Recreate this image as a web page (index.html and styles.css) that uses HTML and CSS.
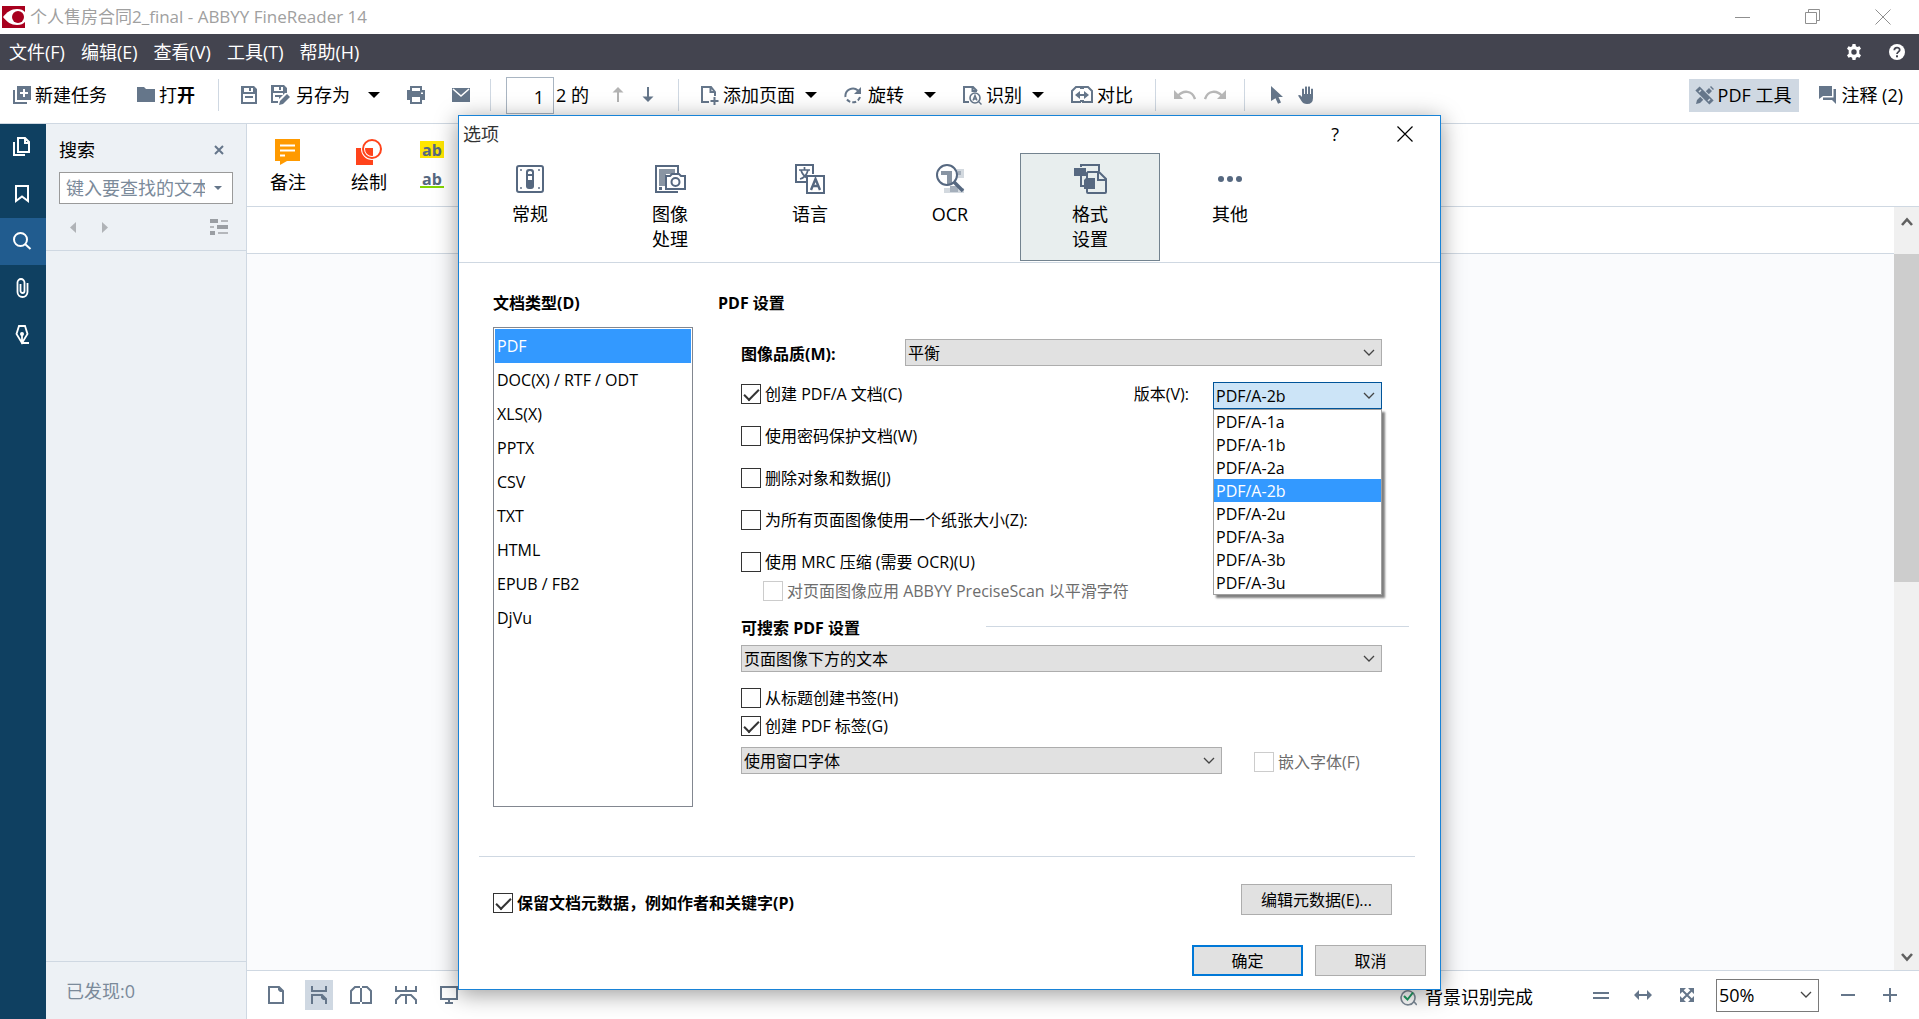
FILE: index.html
```html
<!DOCTYPE html>
<html lang="zh-CN">
<head>
    <meta charset="UTF-8">
    <meta name="viewport" content="width=device-width, initial-scale=1.0">
    <title>个人售房合同2_final - ABBYY FineReader 14</title>
    <link rel="stylesheet" href="styles.css">
</head>
<body>
    <header class="titlebar">
        <svg class="logo" width="23" height="22" viewBox="0 0 23 22"><rect width="23" height="22" fill="#a8001e"/><path d="M1 11C5 6 9 3 15 3c4 0 6 1 8 3v10c-2 2-4 3-8 3-6 0-10-3-14-8z" fill="#fff"/><circle cx="16" cy="11" r="6" fill="#a8001e"/></svg>
        <span class="title">个人售房合同2_final - ABBYY FineReader 14</span>
        <div class="window-buttons">
            <button type="button" aria-label="最小化"><svg width="16" height="16" viewBox="0 0 16 16"><path d="M0 8.500h15"/></svg></button>
            <button type="button" aria-label="还原"><svg width="16" height="16" viewBox="0 0 16 16"><path d="M.5 3.500h11v11H.5zM3.500 3.500v-3h11v11h-3"/></svg></button>
            <button type="button" aria-label="关闭"><svg width="16" height="16" viewBox="0 0 16 16"><path d="M.5.5l15 15M15.500.5l-15 15"/></svg></button>
        </div>
    </header>

    <nav class="menubar">
        <button type="button">文件(F)</button>
        <button type="button">编辑(E)</button>
        <button type="button">查看(V)</button>
        <button type="button">工具(T)</button>
        <button type="button">帮助(H)</button>
        <div class="menu-right">
            <button type="button" aria-label="设置"><svg width="16" height="16" viewBox="0 0 16 16"><path fill="#fff" fill-rule="evenodd" d="M6.500 0h3l.4 2.200 1.500.8 2.100-.8L15 4.800l-1.700 1.500v3.400l1.700 1.500-1.500 2.600-2.100-.8-1.500.8-.4 2.200h-3l-.4-2.200-1.500-.8-2.100.8L1 11.200l1.700-1.500V6.300L1 4.800l1.500-2.600 2.100.8 1.500-.8zM8 5.300a2.700 2.700 0 1 0 0 5.400 2.700 2.700 0 0 0 0-5.400z"/></svg></button>
            <button type="button" aria-label="帮助"><svg width="16" height="16" viewBox="0 0 16 16"><circle cx="8" cy="8" r="8" fill="#fff"/><path d="M5.300 6.200C5.300 2.700 10.700 2.700 10.700 6 10.700 7.800 8 8 8 10" fill="none" stroke="#43444f" stroke-width="1.800"/><rect x="7" y="11.300" width="2" height="2" fill="#43444f"/></svg></button>
        </div>
    </nav>

    <div class="toolbar">
        <div class="tool-group group-file">
            <button type="button"><svg width="18" height="18" viewBox="0 0 18 18"><path fill="#65768a" d="M4 0h14v14H4z"/><path d="M11 3v8M7 7h8" stroke="#fff" stroke-width="2"/><path d="M1 4v13h13" fill="none" stroke="#65768a" stroke-width="2"/></svg>新建任务</button>
            <button type="button"><svg width="18" height="18" viewBox="0 0 18 18"><path fill="#65768a" d="M0 1h7l2 2h9v13H0z"/></svg><span>打<b>开</b></span></button>
        </div>
        <div class="tool-group group-save">
            <button type="button" aria-label="保存"><svg width="16" height="18" viewBox="0 0 16 18"><path fill="#65768a" fill-rule="evenodd" d="M0 0h13l3 3v15H0zM3 2v4h9V2h-2v3H8V2zM2 8v8h12V8zM4 10h8v2H4z"/></svg></button>
            <button type="button" class="save-as"><svg width="19" height="20" viewBox="0 0 19 20"><path fill="#65768a" fill-rule="evenodd" d="M0 0h13l3 3v5h-2l-6 6v-2H4v-2h8V8H2v8h5v2H0zM3 2v4h9V2h-2v3H8V2z"/><path fill="#65768a" d="M16 9l3 3-7 7-4 1 1-4z"/></svg>另存为<i class="caret"></i></button>
            <button type="button" aria-label="打印" class="wide"><svg width="18" height="18" viewBox="0 0 18 18"><path fill="#65768a" fill-rule="evenodd" d="M3 0h12v4h3v10h-3v4H3v-4H0V4h3zM5 2v3h8V2zM5 11v5h8v-5zM14 6.500v1.500h2V6.500z"/></svg></button>
            <button type="button" aria-label="邮件" class="wide"><svg width="18" height="14" viewBox="0 0 18 14"><path fill="#65768a" d="M0 0h18v14H0z"/><path d="M1 1l8 7 8-7" fill="none" stroke="#fff" stroke-width="1.600"/></svg></button>
        </div>
        <div class="tool-group group-page">
            <input type="text" class="page-input" value="1" aria-label="页码">
            <span class="page-total">2 的</span>
            <button type="button" aria-label="上一页" class="page-up"><svg width="12" height="16" viewBox="0 0 12 16"><path d="M6 15V2" stroke="#b3b3b3" stroke-width="2"/><path d="M6 0l5.500 5.500H.5z" fill="#b3b3b3"/></svg></button>
            <button type="button" aria-label="下一页"><svg width="12" height="16" viewBox="0 0 12 16"><path d="M6 0v13" stroke="#65768a" stroke-width="2"/><path d="M6 15l5.500-5.500H.5z" fill="#65768a"/></svg></button>
        </div>
        <div class="tool-group group-edit">
            <button type="button"><svg width="18" height="19" viewBox="0 0 18 19"><path d="M8 16H1V1h9l4 5v4M9.500 1v5H14" fill="none" stroke="#65768a" stroke-width="2"/><path d="M13.500 11v8M9.500 15h8" stroke="#65768a" stroke-width="2"/></svg>添加页面<i class="caret near"></i></button>
            <button type="button" class="rotate"><svg width="18" height="18" viewBox="0 0 18 18"><path d="M1.500 11A7.500 7.500 0 0 1 14 4.500" fill="none" stroke="#65768a" stroke-width="2"/><path fill="#65768a" d="M17 1v7h-7z"/><path d="M3 13.500A7.500 7.500 0 0 0 16 11" fill="none" stroke="#65768a" stroke-width="2" stroke-dasharray="4 2"/></svg>旋转<i class="caret"></i></button>
            <button type="button"><svg width="19" height="19" viewBox="0 0 19 19"><path d="M6 16H1V1h9l4 4M9.500 1v4H14" fill="none" stroke="#65768a" stroke-width="2"/><circle cx="12" cy="12" r="5" fill="#fff" stroke="#65768a" stroke-width="1.600"/><path d="M10 14.500l2-5 2 5M11 13h2M15.500 15.500l3 3" fill="none" stroke="#65768a" stroke-width="1.400"/></svg>识别<i class="caret near"></i></button>
            <button type="button"><svg width="22" height="18" viewBox="0 0 22 18"><path d="M10 16H1V5l4-4h5v2M12 3V1h5l4 4v11h-9v-2M10 16v-2" fill="none" stroke="#65768a" stroke-width="2"/><path d="M6 9h10" stroke="#65768a" stroke-width="2"/><path fill="#65768a" d="M4 9l5-4v8zM18 9l-5-4v8z"/></svg>对比</button>
        </div>
        <div class="tool-group group-undo">
            <button type="button" aria-label="撤消"><svg width="22" height="12" viewBox="0 0 22 12"><path d="M4 7c5-6 14-6 17 3" fill="none" stroke="#b8b8b8" stroke-width="2.400"/><path fill="#b8b8b8" d="M0 1v9h9z"/></svg></button>
            <button type="button" aria-label="重做"><svg width="22" height="12" viewBox="0 0 22 12"><path d="M18 7C13 1 4 1 1 10" fill="none" stroke="#b8b8b8" stroke-width="2.400"/><path fill="#b8b8b8" d="M22 1v9h-9z"/></svg></button>
        </div>
        <div class="tool-group group-pointer">
            <button type="button" aria-label="选择"><svg width="12" height="18" viewBox="0 0 12 18"><path fill="#65768a" d="M0 0l12 11H7.500l2.500 5.500-3 1.300-2.500-5.500L0 15z"/></svg></button>
            <button type="button" aria-label="手形"><svg width="17" height="18" viewBox="0 0 17 18"><path fill="#65768a" d="M4 11V3q1-1 2 0v5h1V1q1-1.500 2 0v7h1V1q1-1.300 2 0v7h1V3q1-1 2 0v9q0 6-6 6-4 0-5.500-3L0 9.500Q2 8 4 11z"/></svg></button>
        </div>
        <div class="toolbar-right">
            <button type="button" class="active"><svg width="19" height="19" viewBox="0 0 19 19"><path d="M1 18l1-4L14 2l3 3L5 17zM15 1l1-1 3 3-1 1z" fill="#65768a"/><path d="M3 3l13 13" stroke="#cfd8e2" stroke-width="8"/><path d="M2.500 2.500l14 14" stroke="#65768a" stroke-width="6"/><path d="M4 6l2-2M13 15l2-2" stroke="#cfd8e2" stroke-width="1.500"/></svg>PDF 工具</button>
            <button type="button"><svg width="18" height="18" viewBox="0 0 18 18"><path fill="#65768a" d="M0 0h13v10H4l-4 3zM14.500 3H17v15l-4-4H4v-2.500h10.500z"/></svg>注释 (2)</button>
        </div>
    </div>

    <main class="workspace">
        <nav class="rail">
            <button type="button" aria-label="页面"><svg width="20" height="22" viewBox="0 0 20 22"><path d="M6 2h7l4 4v10H6zM13 2v5h4M2 6v13h11" fill="none" stroke="#fff" stroke-width="2"/></svg></button>
            <button type="button" aria-label="书签"><svg width="20" height="20" viewBox="0 0 20 20"><path d="M4 2h12v15l-6-4.500L4 17z" fill="none" stroke="#fff" stroke-width="2"/></svg></button>
            <button type="button" aria-label="搜索" class="active"><svg width="20" height="20" viewBox="0 0 20 20"><circle cx="8.500" cy="8.500" r="6.500" fill="none" stroke="#fff" stroke-width="2"/><path d="M13 13l5.500 5" stroke="#fff" stroke-width="2"/></svg></button>
            <button type="button" aria-label="附件"><svg width="20" height="22" viewBox="0 0 20 22"><path d="M15.500 6v9a5 5 0 0 1-10 0V5.500a3.500 3.500 0 0 1 7 0V14a2 2 0 0 1-4 0V7" fill="none" stroke="#fff" stroke-width="1.800"/></svg></button>
            <button type="button" aria-label="签名"><svg width="20" height="22" viewBox="0 0 20 22"><path d="M7 2h6l2.500 8L10 19 4.500 10zM10 10v9h7" fill="none" stroke="#fff" stroke-width="1.800"/><circle cx="10" cy="10" r="2" fill="#fff"/></svg></button>
        </nav>

        <aside class="search-panel">
            <div class="search-top">
                <div class="search-head">
                    <label for="search">搜索</label>
                    <button type="button" aria-label="关闭搜索"><svg width="10" height="10" viewBox="0 0 10 10"><path d="M1 1l8 8M9 1L1 9" stroke="#65768a" stroke-width="2"/></svg></button>
                </div>
                <div class="search-box">
                    <input id="search" type="text" placeholder="键入要查找的文本">
                    <i class="caret small"></i>
                </div>
                <div class="search-nav">
                    <button type="button" aria-label="上一个"><svg width="6" height="11" viewBox="0 0 6 11"><path fill="#b0b3b7" d="M6 0v11L0 5.500z"/></svg></button>
                    <button type="button" aria-label="下一个"><svg width="6" height="11" viewBox="0 0 6 11"><path fill="#b0b3b7" d="M0 0v11l6-5.500z"/></svg></button>
                    <button type="button" aria-label="结果视图" class="result-view"><svg width="18" height="16" viewBox="0 0 18 16"><path fill="#9a9ea3" d="M0 0h8v4H0zM7 6h11v4H7zM0 12h5v4H0z"/><path fill="#b4b7bb" d="M11 1h7v2h-7zM0 7h4v2H0zM8 13h10v2H8z"/></svg></button>
                </div>
            </div>
            <p class="found">已发现:0</p>
        </aside>

        <section class="document">
            <div class="ribbon">
                <button type="button"><svg width="26" height="26" viewBox="0 0 26 26"><path fill="#ff9a00" d="M0 0h25v22H12l-7 4v-4H0z"/><path d="M5 6.500h15M5 11.500h15M5 16.500h5" stroke="#fff" stroke-width="2"/></svg>备注</button>
                <button type="button"><svg width="26" height="26" viewBox="0 0 26 26"><path fill="#ff431b" d="M0 9h17v17H0z"/><circle cx="16" cy="10" r="9" fill="none" stroke="#fff" stroke-width="4"/><circle cx="16" cy="10" r="9" fill="none" stroke="#ff431b" stroke-width="2"/></svg>绘制</button>
                <div class="marks">
                    <button type="button" class="mark-highlight">ab</button>
                    <button type="button" class="mark-underline">ab</button>
                </div>
            </div>
            <div class="canvas">
                <div class="page-area">
                    <div class="strip"></div>
                </div>
                <div class="scrollbar">
                    <svg width="12" height="9" viewBox="0 0 12 9"><path d="M1 8l5-5.500L11 8" fill="none" stroke="#606060" stroke-width="2.600"/></svg>
                    <div class="thumb"></div>
                    <svg class="down" width="12" height="9" viewBox="0 0 12 9"><path d="M1 1l5 5.500L11 1" fill="none" stroke="#606060" stroke-width="2.600"/></svg>
                </div>
            </div>
            <footer class="statusbar">
                <div class="views">
                    <button type="button" aria-label="单页" class="single"><svg width="16" height="18" viewBox="0 0 16 18"><path d="M1 1h10l4 4v12H1z" fill="none" stroke="#65768a" stroke-width="2"/><path fill="#65768a" d="M10 0l6 6h-4l-2-2z"/></svg></button>
                    <button type="button" aria-label="连续单页" class="active"><svg width="16" height="18" viewBox="0 0 16 18"><path d="M1 0v5h14V0M1 18V9h10l4 4v5" fill="none" stroke="#65768a" stroke-width="2"/><path fill="#65768a" d="M10 8l6 6h-4l-2-2z"/></svg></button>
                    <button type="button" aria-label="双页"><svg width="22" height="18" viewBox="0 0 22 18"><path d="M11 1v16M5 1h12l4 4v12H1V5z" fill="none" stroke="#65768a" stroke-width="2"/><path d="M11 0v2M11 16v2" stroke="#fff" stroke-width="2"/></svg></button>
                    <button type="button" aria-label="连续双页"><svg width="22" height="18" viewBox="0 0 22 18"><path d="M1 0v5h20V0M11 0v18M1 18v-4l5-5h10l5 5v4" fill="none" stroke="#65768a" stroke-width="2"/><path d="M11 6v2" stroke="#fff" stroke-width="2"/></svg></button>
                    <button type="button" aria-label="全屏"><svg width="18" height="18" viewBox="0 0 18 18"><path d="M1 1h16v12H1zM9 13v4M5 17h8" fill="none" stroke="#65768a" stroke-width="2"/></svg></button>
                </div>
                <div class="recognized">
                    <svg width="17" height="18" viewBox="0 0 17 18"><path d="M14 13.500a7 7 0 1 1 .8-5.500M14.800 8a7 7 0 0 1-1 5.500l3 3.500" fill="none" stroke="#7d8a97" stroke-width="1.600"/><path d="M4 8l3.500 3.500L13 4.500" fill="none" stroke="#1f9d61" stroke-width="2"/></svg>
                    <span>背景识别完成</span>
                </div>
                <div class="zoom">
                    <button type="button" aria-label="实际大小" class="actual"><svg width="16" height="16" viewBox="0 0 16 16"><path d="M0 6h16M0 11h16" stroke="#65768a" stroke-width="2"/></svg></button>
                    <button type="button" aria-label="适合宽度"><svg width="18" height="16" viewBox="0 0 18 16"><path d="M3 8h12" stroke="#65768a" stroke-width="2"/><path fill="#65768a" d="M0 8l5-5v10zM18 8l-5-5v10z"/></svg></button>
                    <button type="button" aria-label="适合页面"><svg width="14" height="14" viewBox="0 0 14 14"><path d="M1 1l12 12M13 1L1 13" stroke="#65768a" stroke-width="2"/><path fill="#65768a" d="M0 0h6L0 6zM14 0v6L8 0zM0 14V8l6 6zM14 14H8l6-6z"/></svg></button>
                    <span class="select zoom-select">
                        <select aria-label="缩放"><option>50%</option></select>
                        <svg width="12" height="8" viewBox="0 0 12 8"><path d="M1 1l5 5 5-5"/></svg>
                    </span>
                    <button type="button" aria-label="缩小"><svg width="14" height="14" viewBox="0 0 14 14"><path d="M0 7h14" stroke="#65768a" stroke-width="2"/></svg></button>
                    <button type="button" aria-label="放大"><svg width="14" height="14" viewBox="0 0 14 14"><path d="M0 7h14M7 0v14" stroke="#65768a" stroke-width="2"/></svg></button>
                </div>
            </footer>
        </section>
    </main>

    <div class="dialog" role="dialog" aria-labelledby="dialog-title">
        <div class="dialog-title">
            <span id="dialog-title">选项</span>
            <button type="button" class="dialog-help">?</button>
            <button type="button" aria-label="关闭"><svg width="16" height="16" viewBox="0 0 16 16"><path d="M.5.5l15 15M15.500.5l-15 15" stroke="#000" stroke-width="1.200"/></svg></button>
        </div>

        <div class="tabs">
            <button type="button"><svg width="32" height="32" viewBox="0 0 32 32"><rect x="3" y="3" width="26" height="26" rx="2" fill="none" stroke="#566880" stroke-width="2"/><rect x="12" y="6" width="8" height="20" rx="3" fill="#566880"/><path fill="#fff" d="M14 9q2-2 4 0v2h-4zM14 13h4v4h-4z"/><path fill="#8793a4" d="M6 6h2v2H6zM24 6h2v2h-2zM6 24h2v2H6zM24 24h2v2h-2z"/></svg>常规</button>
            <button type="button"><svg width="32" height="32" viewBox="0 0 32 32"><path d="M24 11V3H2v26h22" fill="none" stroke="#566880" stroke-width="2"/><path fill="#8995a3" d="M5 6h16v5H12v12H5z"/><path fill="#566880" d="M5 24h3v3H5z"/><path d="M12 13h4l2-2h7l2 2h4v13H12z" fill="#fff" stroke="#566880" stroke-width="2"/><circle cx="21.500" cy="19" r="4" fill="none" stroke="#566880" stroke-width="2"/></svg>图像<br>处理</button>
            <button type="button"><svg width="32" height="32" viewBox="0 0 32 32"><path d="M13 19H2V2h17v9" fill="none" stroke="#566880" stroke-width="2"/><path d="M5 7h11M10.500 4v3M14 7c-1 4-4 8-8 9M7 7c1 4 3 6 6 8" fill="none" stroke="#566880" stroke-width="1.700"/><rect x="13" y="13" width="17" height="17" fill="#fff" stroke="#566880" stroke-width="2"/><path d="M17 27l4.500-11L26 27M18.500 23h6" fill="none" stroke="#566880" stroke-width="2.400"/></svg>语言</button>
            <button type="button"><svg width="32" height="32" viewBox="0 0 32 32"><path fill="#d3d9df" d="M23 6h7v9h-7zM10 25h20v5H10z"/><path fill="#a5afbb" d="M24 8h3v4h-3zM16 23h8v6h-8z"/><path fill="#8995a3" d="M7 8h11v13h-5V12H7z"/><circle cx="13" cy="12" r="10" fill="none" stroke="#566880" stroke-width="2"/><path d="M20 19l9 9" stroke="#566880" stroke-width="3.500"/></svg>OCR</button>
            <button type="button" class="active"><svg width="34" height="32" viewBox="0 0 34 32"><path d="M26 8V2H8v2M8 12v11h4" fill="none" stroke="#566880" stroke-width="2"/><path fill="#566880" d="M1 5h12v8H1z"/><path d="M15 9h11l7 7v13q0 1-1 1H15q-1 0-1-1V10z" fill="#e8eeee" stroke="#566880" stroke-width="2"/><path d="M25 9v8h8" fill="none" stroke="#566880" stroke-width="2"/><path fill="#566880" d="M13 15h9v11H11v-9z"/></svg>格式<br>设置</button>
            <button type="button"><svg width="32" height="32" viewBox="0 0 32 32"><g fill="#566880"><circle cx="7" cy="16" r="3"/><circle cx="16" cy="16" r="3"/><circle cx="25" cy="16" r="3"/></g></svg>其他</button>
        </div>

        <div class="dialog-body">
            <div class="doc-types">
                <h3 id="types-label">文档类型(D)</h3>
                <ul role="listbox" aria-labelledby="types-label">
                    <li role="option" aria-selected="true" class="selected">PDF</li>
                    <li role="option">DOC(X) / RTF / ODT</li>
                    <li role="option">XLS(X)</li>
                    <li role="option">PPTX</li>
                    <li role="option">CSV</li>
                    <li role="option">TXT</li>
                    <li role="option">HTML</li>
                    <li role="option">EPUB / FB2</li>
                    <li role="option">DjVu</li>
                </ul>
            </div>

            <div class="settings">
                <h3>PDF 设置</h3>
                <div class="fields">
                    <div class="row quality-row">
                        <label class="strong quality-label" for="quality">图像品质(M):</label>
                        <span class="select grow">
                            <select id="quality"><option>平衡</option></select>
                            <svg width="12" height="8" viewBox="0 0 12 8"><path d="M1 1l5 5 5-5"/></svg>
                        </span>
                    </div>
                    <div class="row version-row">
                        <label class="check"><input type="checkbox" checked>创建 PDF/A 文档(C)</label>
                        <label class="version-label" for="version">版本(V):</label>
                        <span class="select open">
                            <select id="version"><option>PDF/A-2b</option></select>
                            <svg width="12" height="8" viewBox="0 0 12 8"><path d="M1 1l5 5 5-5"/></svg>
                            <ul class="options" role="listbox" aria-label="版本">
                                <li role="option">PDF/A-1a</li>
                                <li role="option">PDF/A-1b</li>
                                <li role="option">PDF/A-2a</li>
                                <li role="option" aria-selected="true" class="selected">PDF/A-2b</li>
                                <li role="option">PDF/A-2u</li>
                                <li role="option">PDF/A-3a</li>
                                <li role="option">PDF/A-3b</li>
                                <li role="option">PDF/A-3u</li>
                            </ul>
                        </span>
                    </div>
                    <div class="checks">
                        <label class="check"><input type="checkbox">使用密码保护文档(W)</label>
                        <label class="check"><input type="checkbox">删除对象和数据(J)</label>
                        <label class="check"><input type="checkbox">为所有页面图像使用一个纸张大小(Z):</label>
                        <label class="check"><input type="checkbox">使用 MRC 压缩 (需要 OCR)(U)</label>
                    </div>
                    <label class="check sub disabled"><input type="checkbox" disabled>对页面图像应用 ABBYY PreciseScan 以平滑字符</label>
                </div>

                <div class="fields searchable">
                    <div class="section-head">
                        <label class="strong" for="searchable">可搜索 PDF 设置</label>
                        <hr>
                    </div>
                    <span class="select">
                        <select id="searchable"><option>页面图像下方的文本</option></select>
                        <svg width="12" height="8" viewBox="0 0 12 8"><path d="M1 1l5 5 5-5"/></svg>
                    </span>
                    <div class="checks tight">
                        <label class="check"><input type="checkbox">从标题创建书签(H)</label>
                        <label class="check"><input type="checkbox" checked>创建 PDF 标签(G)</label>
                    </div>
                    <div class="row font-row">
                        <span class="select grow">
                            <select aria-label="字体"><option>使用窗口字体</option></select>
                            <svg width="12" height="8" viewBox="0 0 12 8"><path d="M1 1l5 5 5-5"/></svg>
                        </span>
                        <label class="check disabled embed"><input type="checkbox" disabled>嵌入字体(F)</label>
                    </div>
                </div>
            </div>
        </div>

        <div class="metadata">
            <label class="check strong"><input type="checkbox" checked>保留文档元数据，例如作者和关键字(P)</label>
            <button type="button" class="btn edit">编辑元数据(E)...</button>
        </div>
        <div class="actions">
            <button type="button" class="btn default">确定</button>
            <button type="button" class="btn">取消</button>
        </div>
    </div>
</body>
</html>
```
FILE: styles.css
```css
* {
    box-sizing: border-box;
}
body {
    margin: 0;
    height: 100vh;
    display: flex;
    flex-direction: column;
    position: relative;
    overflow: hidden;
    background: white;
    color: black;
    font-family: "Open Sans", "Noto Sans CJK SC", sans-serif;
    font-size: 18px;
    line-height: 24px;
}
button, input, select {
    font: inherit;
    color: inherit;
}
button {
    padding: 0;
    border: none;
    background: none;
    display: inline-flex;
    align-items: center;
    white-space: nowrap;
}
svg {
    display: block;
    flex: none;
}
ul, p, h3 {
    margin: 0;
    padding: 0;
    list-style: none;
}

/* window title and menu */
.titlebar {
    display: flex;
    align-items: center;
    height: 34px;
    padding: 0 28px 0 2px;
    color: #a0a0a0;
    font-size: 17px;
}
.title {
    flex: 1;
    margin-left: 5px;
}
.window-buttons {
    display: flex;
    gap: 54px;
}
.window-buttons path {
    fill: none;
    stroke: #8f8f8f;
}
.menubar {
    display: flex;
    align-items: center;
    gap: 16px;
    height: 36px;
    padding: 0 14px 0 9px;
    background: #43444f;
    color: white;
}
.menu-right {
    display: flex;
    gap: 27px;
    margin-left: auto;
}

/* main toolbar */
.toolbar {
    display: flex;
    align-items: center;
    height: 54px;
    padding: 0 16px 3px 13px;
    border-bottom: 1px solid #cfd8e2;
}
.tool-group {
    display: flex;
    align-items: center;
    height: 32px;
    padding: 0 22px;
    border-right: 1px solid #cfd8e2;
}
.toolbar button {
    gap: 4px;
}
.group-file {
    gap: 30px;
    padding: 0 23px 0 0;
}
.group-save {
    gap: 14px;
    padding-right: 20px;
}
.toolbar .save-as {
    gap: 6px;
}
.save-as .caret {
    margin-left: 12px;
}
.wide {
    margin-left: 13px;
}
.group-page {
    padding: 0 24px 0 15px;
}
.page-input {
    width: 48px;
    height: 37px;
    padding: 4px 9px 0 0;
    border: 1px solid #a9b5c2;
    background: none;
    text-align: right;
}
.page-total {
    width: 56px;
    margin-left: 2px;
}
.group-page button + button {
    margin-left: 18px;
}
.group-edit {
    gap: 27px;
}
.toolbar .rotate {
    gap: 6px;
}
.group-undo {
    gap: 8px;
    padding: 0 18px;
}
.group-pointer {
    gap: 15px;
    padding: 0 26px;
    border-right: none;
}
.toolbar-right {
    display: flex;
    gap: 20px;
    margin-left: auto;
}
.toolbar-right button {
    height: 33px;
}
.toolbar-right .active {
    padding: 0 8px 0 6px;
    background: #cfd8e2;
}
.caret {
    margin-left: 14px;
    border: 6px solid transparent;
    border-top-color: black;
    border-bottom: none;
}
.caret.near {
    margin-left: 6px;
}
.caret.small {
    border-width: 4px 4px 0;
    border-top-color: #65768a;
    margin: 0;
}

/* workspace */
.workspace {
    flex: 1;
    display: flex;
    min-height: 0;
}
.rail {
    width: 46px;
    background: #0f4061;
}
.rail button {
    width: 100%;
    height: 47px;
    padding: 0 2px 2px 0;
    justify-content: center;
}
.rail .active {
    background: #215c8f;
}
.search-panel {
    display: flex;
    flex-direction: column;
    justify-content: space-between;
    width: 201px;
    background: #edf1f5;
    border-right: 1px solid #cfd8e2;
}
.search-top {
    height: 127px;
    padding: 14px 13px 0;
    border-bottom: 1px solid #cfd8e2;
}
.search-head {
    display: flex;
    justify-content: space-between;
    padding-right: 9px;
}
.search-box {
    display: flex;
    align-items: center;
    height: 32px;
    margin-top: 10px;
    padding: 0 10px 0 6px;
    border: 1px solid #9a9a9a;
    background: white;
}
.search-box input {
    flex: 1;
    min-width: 0;
    padding: 0;
    margin-right: 9px;
    border: none;
    background: none;
}
.search-box input::placeholder {
    color: #7b8a9a;
}
.search-nav {
    display: flex;
    align-items: center;
    gap: 26px;
    margin-top: 15px;
    padding: 0 5px 0 11px;
}
.result-view {
    margin-left: auto;
}
.found {
    height: 58px;
    padding: 17px 20px;
    border-top: 1px solid #cfd8e2;
    color: #7b8a9a;
}
.document {
    flex: 1;
    display: flex;
    flex-direction: column;
    min-width: 0;
}
.ribbon {
    display: flex;
    height: 83px;
    padding: 15px 23px 0;
    gap: 45px;
    border-bottom: 1px solid #cfd8e2;
}
.ribbon > button {
    flex-direction: column;
    justify-content: flex-start;
    gap: 5px;
}
.marks {
    display: flex;
    flex-direction: column;
    gap: 13px;
    margin: 2px 0 0 -12px;
}
.marks button {
    height: 17px;
    padding: 0 2px;
    color: #566880;
    font-size: 16px;
    font-weight: bold;
    line-height: 16px;
}
.mark-highlight {
    background: #ffe600;
}
.marks .mark-underline {
    border-bottom: 2px solid #84d600;
}
.canvas {
    flex: 1;
    display: flex;
    border-bottom: 1px solid #cfd8e2;
}
.page-area {
    flex: 1;
    background: #fafbfd;
}
.strip {
    height: 47px;
    background: white;
    border-bottom: 1px solid #cfd8e2;
}
.scrollbar {
    display: flex;
    flex-direction: column;
    align-items: center;
    width: 25px;
    padding: 10px 0 8px;
    background: #f0f0f0;
}
.thumb {
    width: 100%;
    height: 44%;
    margin-top: 28px;
    background: #cdcdcd;
}
.scrollbar .down {
    margin-top: auto;
}
.statusbar {
    display: flex;
    align-items: center;
    height: 48px;
    padding: 0 22px 0 15px;
}
.views, .zoom, .recognized {
    display: flex;
    align-items: center;
}
.views {
    gap: 11px;
}
.views button {
    height: 30px;
    padding: 0 6px;
}
.views .single {
    margin-right: 4px;
}
.views .active {
    background: #cfd8e2;
}
.recognized {
    gap: 8px;
    margin-left: auto;
    padding-top: 4px;
}
.zoom {
    margin-left: 60px;
    gap: 28px;
}
.actual {
    margin-right: -3px;
}
.zoom-select {
    width: 103px;
    margin: 0 -6px;
}

/* options dialog */
.dialog {
    position: absolute;
    left: 458px;
    top: 115px;
    width: 983px;
    border: 1px solid #1883d7;
    background: white;
    box-shadow: 0 4px 22px rgba(0, 0, 0, 0.4);
    font-size: 16px;
}
.dialog-title {
    display: flex;
    align-items: center;
    gap: 58px;
    height: 37px;
    padding: 0 27px 2px 4px;
    font-size: 18px;
}
.dialog-title span {
    flex: 1;
    color: #333;
}
.tabs {
    display: flex;
    height: 110px;
    padding-left: 1px;
    border-bottom: 1px solid #cfd8e2;
}
.tabs button {
    flex-direction: column;
    width: 140px;
    height: 108px;
    padding-top: 9px;
    border: 1px solid transparent;
    font-size: 18px;
    line-height: 25px;
}
.tabs svg {
    margin-bottom: 7px;
}
.tabs .active {
    border-color: #73838f;
    background: #e8eeee;
}
.dialog-body {
    display: flex;
    gap: 25px;
    padding: 28px 31px 49px 34px;
}
h3, .strong {
    font-size: 16px;
    font-weight: bold;
    line-height: 24px;
}
.doc-types {
    width: 200px;
}
.doc-types ul {
    height: 480px;
    margin-top: 12px;
    padding: 1px;
    border: 1px solid #828790;
}
.doc-types li {
    padding: 5px 2px;
    line-height: 24px;
}
.selected {
    background: #3399ff;
    color: white;
}
.settings {
    flex: 1;
}
.fields {
    padding: 24px 27px 0 23px;
}
.searchable {
    padding-top: 13px;
}
.row {
    display: flex;
    align-items: flex-start;
}
.quality-row {
    align-items: flex-end;
}
.quality-label {
    width: 164px;
}
.version-row {
    margin-top: 16px;
}
.version-label {
    margin: 0 24px 0 auto;
}
.select {
    display: block;
    position: relative;
}
.select.grow {
    flex: 1;
}
.select select {
    display: block;
    appearance: none;
    width: 100%;
    height: 27px;
    padding: 0 28px 0 2px;
    border: 1px solid #adadad;
    border-radius: 0;
    background: #e1e1e1;
}
.select svg {
    position: absolute;
    right: 7px;
    top: 50%;
    margin-top: -4px;
    pointer-events: none;
}
.select path {
    fill: none;
    stroke: #444;
    stroke-width: 1.3;
}
.zoom-select select {
    height: 33px;
    border-color: #7a7a7a;
    background: white;
}
.select.open {
    width: 169px;
}
.open select {
    border-color: #005499;
    background: #cce4f7;
}
.options {
    position: absolute;
    left: 0;
    right: 0;
    top: 100%;
    z-index: 1;
    border: 1px solid #a0a0a0;
    background: white;
    box-shadow: 3px 3px 2px rgba(0, 0, 0, 0.5);
}
.options li {
    padding: 1px 0 0 2px;
    line-height: 22px;
}
.check {
    display: flex;
    align-items: center;
    gap: 4px;
    height: 24px;
    white-space: nowrap;
}
.check input {
    appearance: none;
    position: relative;
    width: 20px;
    height: 20px;
    margin: 0;
    border: 1px solid #333;
    background: white;
}
.check input:checked::before {
    content: "";
    position: absolute;
    left: 2px;
    top: 4px;
    width: 13px;
    height: 6px;
    border: solid #333;
    border-width: 0 0 2px 2px;
    transform: rotate(-45deg);
}
.checks {
    display: flex;
    flex-direction: column;
    gap: 18px;
    margin-top: 15px;
}
.checks.tight {
    gap: 4px;
    margin-top: 14px;
}
.check.sub {
    margin: 5px 0 0 22px;
}
.check.disabled {
    color: #6d6d6d;
}
.disabled input {
    border-color: #ccc;
}
.section-head {
    display: flex;
    justify-content: space-between;
    align-items: flex-start;
    margin: 0 -27px 5px 0;
}
hr {
    width: 423px;
    margin: 10px 0 0;
    border: none;
    border-top: 1px solid #cfd8e2;
}
.font-row {
    align-items: flex-end;
    margin-top: 9px;
}
.embed {
    width: 128px;
    margin-left: 32px;
}
.metadata {
    display: flex;
    align-items: flex-end;
    justify-content: space-between;
    margin: 0 25px 0 20px;
    padding: 27px 23px 0 14px;
    border-top: 1px solid #cfd8e2;
}
.btn {
    justify-content: center;
    width: 111px;
    height: 31px;
    padding-top: 1px;
    border: 1px solid #adadad;
    background: #e1e1e1;
}
.btn.edit {
    width: 151px;
}
.btn.default {
    border: 2px solid #0078d7;
}
.actions {
    display: flex;
    justify-content: flex-end;
    gap: 12px;
    padding: 30px 14px 13px;
}
```
